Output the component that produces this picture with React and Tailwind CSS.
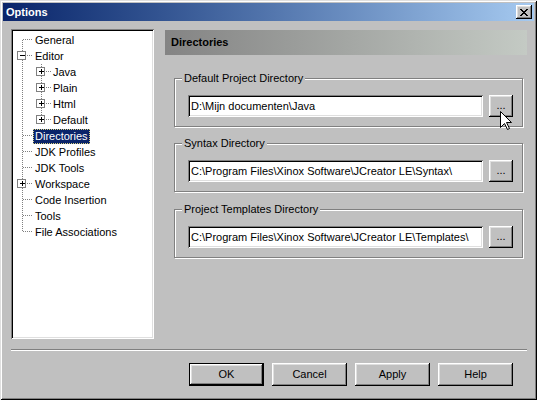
import React from 'react';

const raised =
  'shadow-[inset_-1px_-1px_0_#000,inset_1px_1px_0_#fff,inset_-2px_-2px_0_#808080,inset_2px_2px_0_#dfdfdf]';
const sunken =
  'shadow-[inset_1px_1px_0_#808080,inset_-1px_-1px_0_#fff,inset_2px_2px_0_#000,inset_-2px_-2px_0_#dfdfdf]';

const treeItems = [
  { label: 'General', level: 0 },
  { label: 'Editor', level: 0, box: 'minus' },
  { label: 'Java', level: 1, box: 'plus' },
  { label: 'Plain', level: 1, box: 'plus' },
  { label: 'Html', level: 1, box: 'plus' },
  { label: 'Default', level: 1, box: 'plus', lastChild: true },
  { label: 'Directories', level: 0, selected: true },
  { label: 'JDK Profiles', level: 0 },
  { label: 'JDK Tools', level: 0 },
  { label: 'Workspace', level: 0, box: 'plus' },
  { label: 'Code Insertion', level: 0 },
  { label: 'Tools', level: 0 },
  { label: 'File Associations', level: 0 },
];

function Expander({ cx, type }) {
  return (
    <g shapeRendering="crispEdges">
      <rect x={cx - 4.5} y={3.5} width={8} height={8} fill="#fff" stroke="#808080" />
      <line x1={cx - 2} y1={7.5} x2={cx + 3} y2={7.5} stroke="#000" />
      {type === 'plus' && <line x1={cx + 0.5} y1={5} x2={cx + 0.5} y2={10} stroke="#000" />}
    </g>
  );
}

function TreeRow({ item, first, last }) {
  const width = item.level === 0 ? 20 : 38;
  const dot = { stroke: '#808080', strokeDasharray: '1 1', shapeRendering: 'crispEdges' };
  return (
    <div className="flex h-[16px] items-center">
      <svg width={width} height={16} className="shrink-0">
        {/* root vertical */}
        <line x1={9.5} y1={first ? 8 : 0} x2={9.5} y2={last ? 8 : 16} {...dot} />
        {item.level === 0 && <line x1={10} y1={7.5} x2={20} y2={7.5} {...dot} />}
        {item.level === 1 && (
          <>
            <line x1={28.5} y1={0} x2={28.5} y2={item.lastChild ? 8 : 16} {...dot} />
            <line x1={29} y1={7.5} x2={38} y2={7.5} {...dot} />
          </>
        )}
        {item.box && <Expander cx={item.level === 0 ? 9 : 28} type={item.box} />}
      </svg>
      <span
        className={
          item.selected
            ? 'h-[15px] px-[1px] leading-[13px] bg-[#0a246a] text-white border border-dotted border-[#d8d080]'
            : 'px-[2px] leading-[13px] text-black'
        }
      >
        {item.label}
      </span>
    </div>
  );
}

function PathGroup({ title, value, className }) {
  return (
    <div
      className={`relative ml-[9px] w-[349px] h-[49px] border border-[#808080] shadow-[1px_1px_0_#fff,inset_1px_1px_0_#fff] ${className}`}
    >
      <span className="absolute -top-[8px] left-[7px] bg-[#c0c0c0] px-[2px] leading-[14px]">{title}</span>
      <div className="flex pl-[13px] pt-[16px]">
        <div className={`w-[295px] h-[22px] bg-white pl-[3px] flex items-center ${sunken}`}>{value}</div>
        <button className={`ml-[6px] w-[24px] h-[22px] bg-[#c0c0c0] pb-[2px] leading-none ${raised}`}>...</button>
      </div>
    </div>
  );
}

function DialogButton({ children, isDefault }) {
  return (
    <button
      className={`w-[75px] h-[23px] bg-[#c0c0c0] text-black ${isDefault ? 'border border-black' : ''} ${raised}`}
    >
      {children}
    </button>
  );
}

export default function App() {
  return (
    <div
      className="relative w-[537px] h-[400px] bg-[#c0c0c0] p-[3px] text-[11px] text-black shadow-[inset_1px_1px_0_#dfdfdf,inset_-1px_-1px_0_#000,inset_2px_2px_0_#fff,inset_-2px_-2px_0_#808080] overflow-hidden"
      style={{ fontFamily: '"Liberation Sans", Arial, sans-serif' }}
    >
      {/* Title bar */}
      <div className="h-[18px] flex items-center justify-between pl-[3px] pr-[2px] bg-gradient-to-r from-[#0a246a] to-[#a6caf0]">
        <span className="text-white font-bold text-[11px]">Options</span>
        <button className={`w-[16px] h-[14px] bg-[#c0c0c0] flex items-center justify-center ${raised}`}>
          <svg width="8" height="7" viewBox="0 0 8 7" shapeRendering="crispEdges">
            <path d="M0 0h2v1h-2zM6 0h2v1h-2zM1 1h2v1h-2zM5 1h2v1h-2zM2 2h4v1h-4zM3 3h2v1h-2zM2 4h4v1h-4zM1 5h2v1h-2zM5 5h2v1h-2zM0 6h2v1h-2zM6 6h2v1h-2z" fill="#000" />
          </svg>
        </button>
      </div>

      {/* Body */}
      <div className="flex pl-[8px] pt-[8px]">
        <div className={`w-[143px] h-[310px] bg-white pt-[3px] pl-[2px] ${sunken}`}>
          {treeItems.map((item, i) => (
            <TreeRow key={item.label} item={item} first={i === 0} last={i === treeItems.length - 1} />
          ))}
        </div>

        <div className="ml-[11px] w-[362px]">
          <div className="mt-[1px] h-[25px] flex items-center pl-[6px] font-bold bg-gradient-to-r from-[#848484] to-[#c4cac4]">
            Directories
          </div>
          <PathGroup className="mt-[23px]" title="Default Project Directory" value="D:\Mijn documenten\Java" />
          <PathGroup
            className="mt-[16px]"
            title="Syntax Directory"
            value="C:\Program Files\Xinox Software\JCreator LE\Syntax\"
          />
          <PathGroup
            className="mt-[17px]"
            title="Project Templates Directory"
            value="C:\Program Files\Xinox Software\JCreator LE\Templates\"
          />
        </div>
      </div>

      {/* Separator */}
      <div className="ml-[8px] mt-[10px] w-[516px] h-[2px] border-t border-[#808080] border-b border-b-white" />

      {/* Buttons */}
      <div className="flex gap-[8px] ml-[186px] mt-[12px]">
        <DialogButton isDefault>OK</DialogButton>
        <DialogButton>Cancel</DialogButton>
        <DialogButton>Apply</DialogButton>
        <DialogButton>Help</DialogButton>
      </div>

      {/* Mouse cursor */}
      <svg className="absolute left-[500px] top-[111px]" width="12" height="20" viewBox="0 0 12 20">
        <path
          d="M0.5 0.5 L0.5 16.5 L4.5 12.5 L7.5 18.5 L9.5 17.5 L6.5 11.5 L11.5 11.5 Z"
          fill="#fff"
          stroke="#000"
          strokeLinejoin="miter"
        />
      </svg>
    </div>
  );
}
